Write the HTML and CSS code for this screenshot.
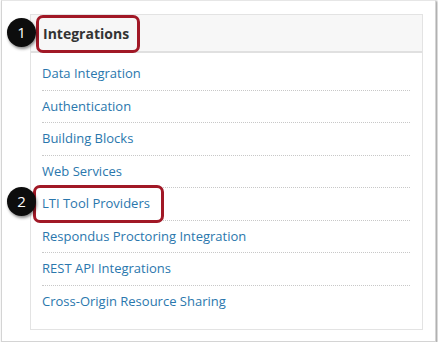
FILE: index.html
```html
<!DOCTYPE html>
<html lang="en">
<head>
    <meta charset="UTF-8">
    <meta name="viewport" content="width=device-width, initial-scale=1.0">
    <title>Integrations</title>
    <link rel="stylesheet" href="styles.css">
</head>
<body>
    <div class="window">
        <div class="panel">
            <h2 class="panel-title">Integrations</h2>
            <ul class="links">
                <li><a href="#">Data Integration</a></li>
                <li><a href="#">Authentication</a></li>
                <li><a href="#">Building Blocks</a></li>
                <li><a href="#">Web Services</a></li>
                <li><a href="#">LTI Tool Providers</a></li>
                <li><a href="#">Respondus Proctoring Integration</a></li>
                <li><a href="#">REST API Integrations</a></li>
                <li><a href="#">Cross-Origin Resource Sharing</a></li>
            </ul>
        </div>
        <!-- callouts -->
        <div class="callout box-1"></div>
        <div class="callout box-2"></div>
        <div class="step step-1">1</div>
        <div class="step step-2">2</div>
    </div>
</body>
</html>
```

FILE: styles.css
```css
* {
    margin: 0;
    padding: 0;
    box-sizing: border-box;
}

body {
    font-family: 'Open Sans', 'Liberation Sans', sans-serif;
    background-color: #fff;
}

.window {
    position: relative;
    margin: 0 0 0 1px;
    width: 435px;
    height: 342px;
    border: 1px solid #d4d4d4;
    border-top-color: #e6e6e6;
    box-shadow: 1px 1px 2px rgba(0, 0, 0, 0.45);
    padding: 13px 0 0 28px;
    background-color: #fff;
}

.panel {
    width: 393px;
    height: 316px;
    border: 1px solid #e3e3e3;
    display: flex;
    flex-direction: column;
}

.panel-title {
    height: 38px;
    background-color: #f7f7f7;
    border-bottom: 2px solid #e0e0e0;
    padding-left: 12px;
    font-size: 14px;
    font-weight: bold;
    color: #333;
    line-height: 37px;
}

.links {
    list-style: none;
    padding: 5px 12px 0 11px;
}

.links li {
    line-height: 31.5px;
    border-bottom: 1px dotted #c8c8c8;
    font-size: 13px;
}

.links li:last-child {
    border-bottom: none;
}

.links a {
    color: #2a77ad;
    text-decoration: none;
}

.callout {
    position: absolute;
    border: 3px solid #a11826;
    border-radius: 7px;
}

.box-1 {
    left: 34px;
    top: 14px;
    width: 104px;
    height: 38px;
}

.box-2 {
    left: 31px;
    top: 184px;
    width: 131px;
    height: 38px;
}

.step {
    position: absolute;
    width: 29px;
    height: 29px;
    border-radius: 50%;
    background-color: #0d0d0d;
    box-shadow: 1px 2px 3px rgba(0, 0, 0, 0.45);
    color: #fff;
    font-size: 15px;
    line-height: 29px;
    text-align: center;
}

.step-1 {
    left: 5px;
    top: 17px;
}

.step-2 {
    left: 5px;
    top: 186px;
}
```
